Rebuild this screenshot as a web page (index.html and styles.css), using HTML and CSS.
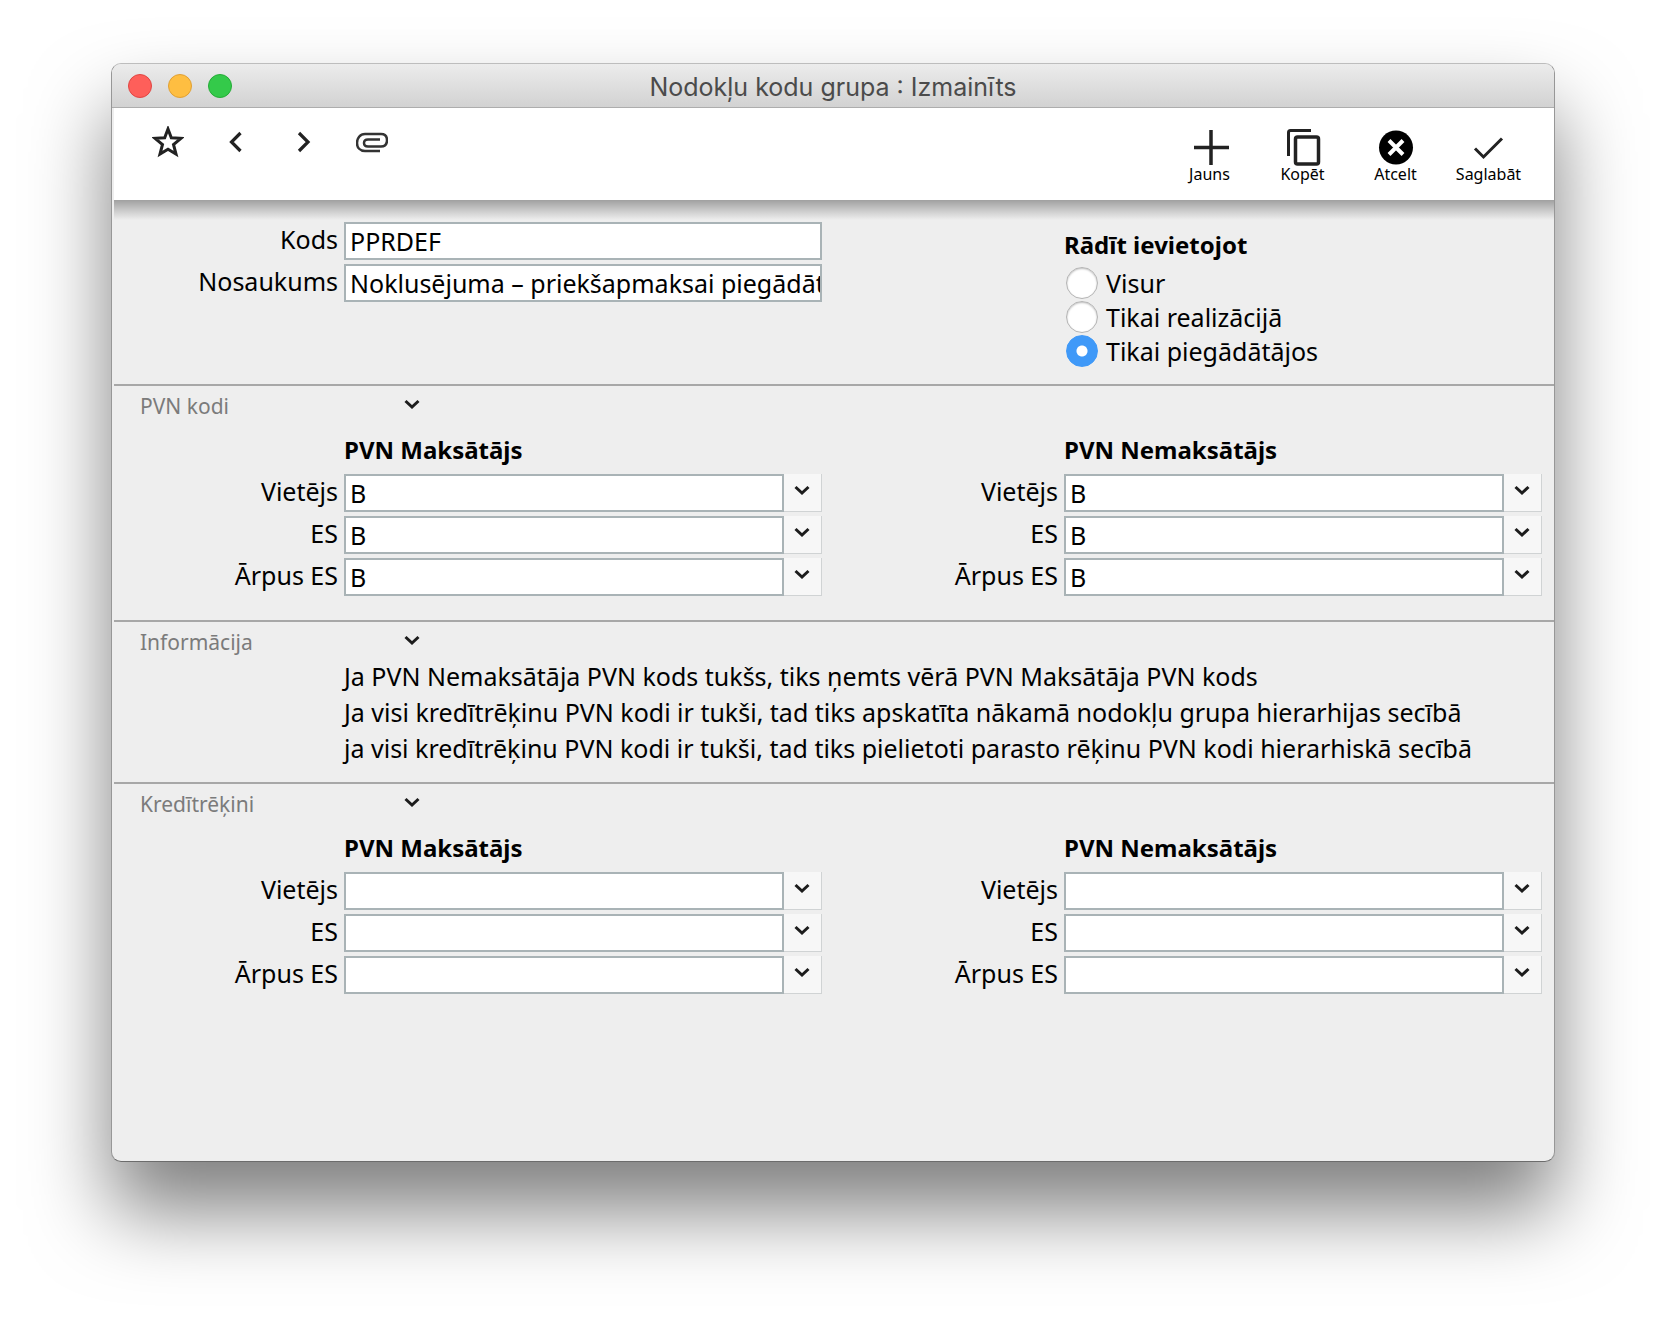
FILE: index.html
```
<!DOCTYPE html>
<html lang="lv">
<head>
<meta charset="utf-8">
<title>Nodokļu kodu grupa : Izmainīts</title>
<link rel="stylesheet" href="styles.css">
</head>
<body>
<svg class="sprite" aria-hidden="true">
  <symbol id="chevron" viewBox="0 0 16 11"><path d="M1.500 2 8 8 14.500 2" fill="none" stroke="#1c1c1c" stroke-width="3"/></symbol>
</svg>
<main class="window">
  <header class="titlebar">
    <div class="lights">
      <button class="light close" aria-label="Aizvērt"></button>
      <button class="light minimize" aria-label="Minimizēt"></button>
      <button class="light maximize" aria-label="Maksimizēt"></button>
    </div>
    <h1 class="title">Nodokļu kodu grupa : Izmainīts</h1>
  </header>

  <nav class="toolbar">
    <div class="tools">
      <button class="tool" aria-label="Izlase"><svg width="32" height="32" viewBox="0 0 32 32"><path d="M16 3 19.300 11.800 29 12.300 21.500 18.500 24 28 16 23.200 8 28 10.500 18.500 3 12.300 12.700 11.800Z" fill="none" stroke="#222" stroke-width="3"/></svg></button>
      <button class="tool" aria-label="Iepriekšējais"><svg width="32" height="32" viewBox="0 0 32 32"><path d="M20.500 7 11.500 16l9 9" fill="none" stroke="#222" stroke-width="3.200"/></svg></button>
      <button class="tool" aria-label="Nākamais"><svg width="32" height="32" viewBox="0 0 32 32"><path d="M11 7l9 9-9 9" fill="none" stroke="#222" stroke-width="3.200"/></svg></button>
      <button class="tool" aria-label="Pielikumi"><svg width="32" height="32" viewBox="0 0 32 32"><path d="M24 25H9C4 25 1 21.500 1 17S4 8 9 8H25C29 8 31 10.500 31 14.300S29 20.500 25 20.500H12C9.500 20.500 8 19 8 17S9.500 13.500 12 13.500H24" fill="none" stroke="#333" stroke-width="2.500"/></svg></button>
    </div>
    <div class="actions">
      <button class="action"><svg width="38" height="38" viewBox="0 0 38 38"><path d="M20 2v35M3 19.500h35" fill="none" stroke="#222" stroke-width="3.500"/></svg>Jauns</button>
      <button class="action"><svg width="38" height="38" viewBox="0 0 38 38"><path d="M4.500 28V4.500Q4.500 2.500 6.500 2.500H27" fill="none" stroke="#222" stroke-width="3"/><rect x="11.500" y="9" width="23" height="27" rx="2" fill="none" stroke="#222" stroke-width="3.500"/></svg>Kopēt</button>
      <button class="action"><svg width="38" height="38" viewBox="0 0 38 38"><circle cx="19" cy="19.500" r="17" fill="#000"/><path d="m12 12.500 14 14m0-14-14 14" stroke="#fff" stroke-width="4"/></svg>Atcelt</button>
      <button class="action"><svg width="38" height="38" viewBox="0 0 38 38"><path d="M5 20.500l8.500 8.500L32 10.500" fill="none" stroke="#222" stroke-width="3"/></svg>Saglabāt</button>
    </div>
  </nav>

  <form class="form">
    <section class="columns general">
      <div class="fields">
        <div class="row"><label for="code">Kods</label><input id="code" type="text" value="PPRDEF"></div>
        <div class="row"><label for="name">Nosaukums</label><input id="name" type="text" value="Noklusējuma – priekšapmaksai piegādātājiem"></div>
      </div>
      <fieldset class="choices">
        <legend>Rādīt ievietojot</legend>
        <label><input type="radio" name="show">Visur</label>
        <label><input type="radio" name="show">Tikai realizācijā</label>
        <label><input type="radio" name="show" checked>Tikai piegādātājos</label>
      </fieldset>
    </section>

    <section class="section">
      <header class="section-head"><h2>PVN kodi</h2><button type="button" class="fold" aria-label="Sakļaut PVN kodi"><svg width="16" height="11"><use href="#chevron"/></svg></button></header>
      <div class="columns codes">
        <div class="fields">
          <h3>PVN Maksātājs</h3>
          <div class="row"><label for="a1">Vietējs</label><input id="a1" type="text" value="B"><button type="button" class="pick" aria-label="Izvēlēties"><svg width="16" height="11"><use href="#chevron"/></svg></button></div>
          <div class="row"><label for="a2">ES</label><input id="a2" type="text" value="B"><button type="button" class="pick" aria-label="Izvēlēties"><svg width="16" height="11"><use href="#chevron"/></svg></button></div>
          <div class="row"><label for="a3">Ārpus ES</label><input id="a3" type="text" value="B"><button type="button" class="pick" aria-label="Izvēlēties"><svg width="16" height="11"><use href="#chevron"/></svg></button></div>
        </div>
        <div class="fields">
          <h3>PVN Nemaksātājs</h3>
          <div class="row"><label for="b1">Vietējs</label><input id="b1" type="text" value="B"><button type="button" class="pick" aria-label="Izvēlēties"><svg width="16" height="11"><use href="#chevron"/></svg></button></div>
          <div class="row"><label for="b2">ES</label><input id="b2" type="text" value="B"><button type="button" class="pick" aria-label="Izvēlēties"><svg width="16" height="11"><use href="#chevron"/></svg></button></div>
          <div class="row"><label for="b3">Ārpus ES</label><input id="b3" type="text" value="B"><button type="button" class="pick" aria-label="Izvēlēties"><svg width="16" height="11"><use href="#chevron"/></svg></button></div>
        </div>
      </div>
    </section>

    <section class="section">
      <header class="section-head"><h2>Informācija</h2><button type="button" class="fold" aria-label="Sakļaut Informācija"><svg width="16" height="11"><use href="#chevron"/></svg></button></header>
      <div class="notes">
        <p>Ja PVN Nemaksātāja PVN kods tukšs, tiks ņemts vērā PVN Maksātāja PVN kods</p>
        <p>Ja visi kredītrēķinu PVN kodi ir tukši, tad tiks apskatīta nākamā nodokļu grupa hierarhijas secībā</p>
        <p>ja visi kredītrēķinu PVN kodi ir tukši, tad tiks pielietoti parasto rēķinu PVN kodi hierarhiskā secībā</p>
      </div>
    </section>

    <section class="section">
      <header class="section-head"><h2>Kredītrēķini</h2><button type="button" class="fold" aria-label="Sakļaut Kredītrēķini"><svg width="16" height="11"><use href="#chevron"/></svg></button></header>
      <div class="columns codes">
        <div class="fields">
          <h3>PVN Maksātājs</h3>
          <div class="row"><label for="c1">Vietējs</label><input id="c1" type="text"><button type="button" class="pick" aria-label="Izvēlēties"><svg width="16" height="11"><use href="#chevron"/></svg></button></div>
          <div class="row"><label for="c2">ES</label><input id="c2" type="text"><button type="button" class="pick" aria-label="Izvēlēties"><svg width="16" height="11"><use href="#chevron"/></svg></button></div>
          <div class="row"><label for="c3">Ārpus ES</label><input id="c3" type="text"><button type="button" class="pick" aria-label="Izvēlēties"><svg width="16" height="11"><use href="#chevron"/></svg></button></div>
        </div>
        <div class="fields">
          <h3>PVN Nemaksātājs</h3>
          <div class="row"><label for="d1">Vietējs</label><input id="d1" type="text"><button type="button" class="pick" aria-label="Izvēlēties"><svg width="16" height="11"><use href="#chevron"/></svg></button></div>
          <div class="row"><label for="d2">ES</label><input id="d2" type="text"><button type="button" class="pick" aria-label="Izvēlēties"><svg width="16" height="11"><use href="#chevron"/></svg></button></div>
          <div class="row"><label for="d3">Ārpus ES</label><input id="d3" type="text"><button type="button" class="pick" aria-label="Izvēlēties"><svg width="16" height="11"><use href="#chevron"/></svg></button></div>
        </div>
      </div>
    </section>
  </form>
</main>
</body>
</html>
```
FILE: styles.css
```
* { box-sizing: border-box; }

body {
  margin: 0;
  padding: 63px 111px 160px;
  min-height: 100vh;
  display: flex;
  background: #fff;
  color: #000;
  font: 25px/32px "Noto Sans", "Open Sans", sans-serif;
  overflow-x: hidden;
}

h1, h2, h3, p { margin: 0; font-weight: normal; }
button { margin: 0; padding: 0; border: 0; background: none; color: inherit; font: inherit; }
svg { display: block; }
.sprite { position: absolute; width: 0; height: 0; }

.window {
  flex: 1;
  min-width: 0;
  border: 1px solid #979797;
  border-top-color: #bdbdbd;
  border-bottom-color: #6c6c6c;
  border-radius: 10px;
  background: #eee;
  box-shadow: 0 49px 80px rgba(0, 0, 0, .5);
}

.titlebar {
  display: grid;
  grid-template-columns: 1fr auto 1fr;
  align-items: center;
  height: 44px;
  border-bottom: 1px solid #adadad;
  border-radius: 9px 9px 0 0;
  background: linear-gradient(#ececec, #d2d2d2);
}
.lights { display: flex; gap: 16px; padding-left: 16px; }
.light { width: 24px; height: 24px; border: 1px solid; border-radius: 50%; }
.close { background: #fe5f5a; border-color: #e04643; }
.minimize { background: #febe41; border-color: #e0a034; }
.maximize { background: #34ca4a; border-color: #25ac37; }
.title { padding-top: 2px; color: #4b4b4b; font: 25px/32px Inter, sans-serif; }

.toolbar {
  display: flex;
  justify-content: space-between;
  height: 92px;
  margin-left: 2px;
  background: #fff;
}
.tools { display: flex; gap: 36px; padding: 18px 0 0 38px; }
.tool { width: 32px; height: 32px; }
.actions { display: flex; padding: 20px 19px 0 0; }
.action {
  display: flex;
  flex-direction: column;
  align-items: center;
  width: 93px;
  font-size: 16px;
  line-height: 16px;
}

.form {
  margin-left: 2px;
  padding-top: 22px;
  background: linear-gradient(#a0a0a0, #d0d0d0 12px, #eee 20px) top / 100% 20px no-repeat;
}
.columns { display: grid; grid-template-columns: 1fr 1fr; }
.general { padding-bottom: 17px; }
.fields { display: grid; gap: 4px; align-content: start; }
.row {
  display: grid;
  grid-template-columns: 230px 1fr auto;
  height: 38px;
  padding-right: 12px;
}
.row label { padding-right: 6px; line-height: 34px; text-align: right; }
.row input {
  min-width: 0;
  width: 100%;
  padding: 0 0 0 4px;
  border: 2px solid #a9b3b6;
  border-radius: 0;
  background: #fff;
  color: #000;
  font: inherit;
}
.pick {
  display: grid;
  place-items: center;
  width: 38px;
  padding: 0 2px 4px 0;
  border: solid #d0d3d4;
  border-width: 0 1px 1px 0;
  background: #f7f7f7;
}

.choices {
  display: grid;
  gap: 2px;
  margin: 0;
  padding: 0 0 0 230px;
  border: 0;
}
.choices legend { padding: 7px 0 6px; font-size: 24px; font-weight: bold; }
.choices label { display: flex; align-items: center; gap: 8px; height: 32px; }
.choices input {
  appearance: none;
  width: 32px;
  height: 32px;
  margin: 0 0 0 2px;
  border: 1px solid #b4b4b4;
  border-radius: 50%;
  background: #fff;
  box-shadow: inset 0 1px 2px rgba(0, 0, 0, .25);
}
.choices input:checked {
  border-color: #3f99f8;
  background: radial-gradient(circle, #fff 5px, #3f99f8 6px);
  box-shadow: none;
}

.section { border-top: 2px solid #a7a7a7; }
.section-head {
  display: flex;
  align-items: center;
  height: 36px;
  padding: 4px 0 0 26px;
}
.section-head h2 { width: 264px; color: #7b7b7b; font-size: 21px; }
.fold { padding-bottom: 4px; }
.codes { padding: 12px 0 24px; }
.fields h3 { padding: 0 0 4px 230px; font-size: 24px; font-weight: bold; }
.notes { padding: 0 0 16px 230px; line-height: 36px; }
```
